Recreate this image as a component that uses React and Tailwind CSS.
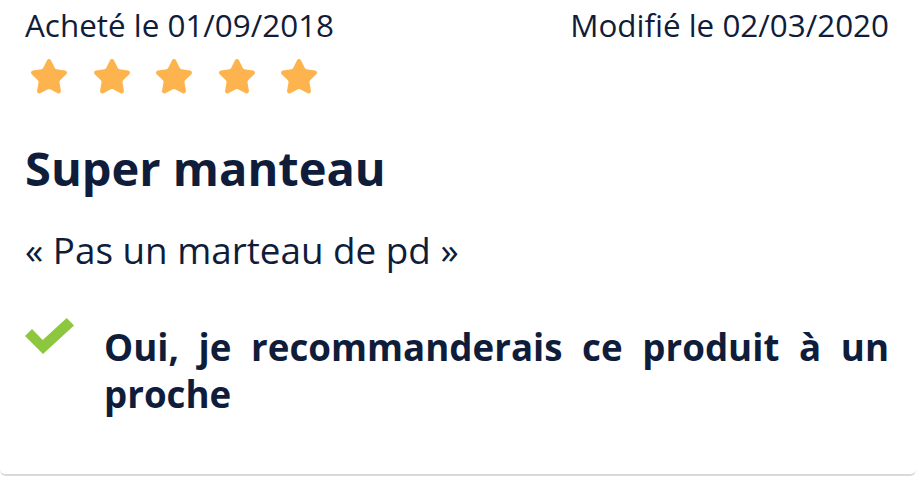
import { Star } from "lucide-react";

const ink = "text-[#0f1d3b]";

function Stars({ count = 5 }) {
  return (
    <div className="flex gap-[22.5px] mt-[10px] ml-[4px]">
      {Array.from({ length: count }).map((_, i) => (
        <Star
          key={i}
          size={40}
          strokeWidth={1.6}
          className="text-[#fdb44e] fill-[#fdb44e]"
        />
      ))}
    </div>
  );
}

function Check() {
  return (
    <svg width="50" height="40" viewBox="25 317 50 40" className="shrink-0">
      <polygon
        points="32,330 42.7,341 66.7,319 74,326.5 43,355 25,337"
        fill="#8dc63f"
      />
    </svg>
  );
}

export default function App() {
  return (
    <div className="w-[916px] h-[485px] bg-white" style={{ fontFamily: '"Open Sans", sans-serif' }}>
      <div className={`pl-[25px] pr-[27px] pb-[56px] border-b-2 border-[#d9d9d9] rounded-b-[6px] ${ink}`}>
        {/* dates */}
        <div className="flex justify-between pt-[3px] text-[31.4px] leading-[44px]">
          <span>Acheté le 01/09/2018</span>
          <span>Modifié le 02/03/2020</span>
        </div>

        <Stars />

        <h2 className="mt-[43px] text-[47px] leading-[56px] font-bold">Super manteau</h2>

        <p className="mt-[30px] text-[36.8px] leading-[48px]">« Pas un marteau de pd »</p>

        {/* recommandation */}
        <div className="flex mt-[42px]">
          <Check />
          <p className="ml-[29px] pt-[8px] text-[36.7px] leading-[47px] font-bold text-justify">
            Oui, je recommanderais ce produit à un proche
          </p>
        </div>
      </div>
    </div>
  );
}
